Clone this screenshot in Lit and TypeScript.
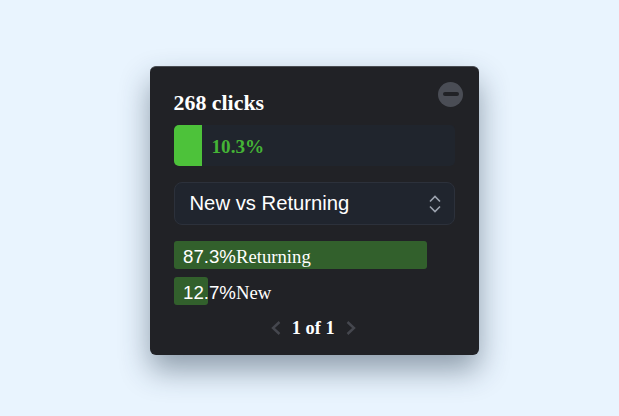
import { LitElement, css, html } from 'lit';
import { customElement } from 'lit/decorators.js';

const rows = [
  { pct: '87.3%', label: 'Returning', width: 253 },
  { pct: '12.7%', label: 'New', width: 34.5 }
];

@customElement('app-root')
export class AppRoot extends LitElement {
  static styles = css`
    :host {
      display: block;
      min-height: 416px;
      background: #e9f4fe;
      font-family: 'Liberation Serif', serif;
      overflow: hidden;
    }

    .page {
      padding: 66px 0 0 150px;
    }

    .card {
      position: relative;
      box-sizing: border-box;
      width: 329px;
      height: 289px;
      padding: 23px 24px 0 23.5px;
      background: #212226;
      border-radius: 6px;
      border-top: 1px solid #4a4d53;
      box-shadow: 0 15px 30px rgba(30, 50, 70, 0.45);
      color: #fff;
    }

    .close {
      position: absolute;
      top: 14.5px;
      right: 16px;
      width: 25px;
      height: 25px;
      border-radius: 50%;
      background: #4a4d55;
      display: flex;
      align-items: center;
      justify-content: center;
    }

    .close span {
      width: 16px;
      height: 4px;
      border-radius: 2px;
      background: #212226;
    }

    .title {
      font-size: 21.9px;
      font-weight: 700;
      line-height: 26px;
      margin-bottom: 9px;
    }

    .progress {
      display: flex;
      align-items: center;
      height: 41px;
      background: #20252d;
      border-radius: 5px;
      overflow: hidden;
      margin-bottom: 16px;
    }

    .progress-fill {
      width: 28px;
      height: 100%;
      background: #4dc23a;
    }

    .progress-label {
      margin: 2px 0 0 10px;
      font-size: 19.2px;
      font-weight: 700;
      color: #45b436;
    }

    .select {
      box-sizing: border-box;
      display: flex;
      align-items: center;
      justify-content: space-between;
      height: 43px;
      padding: 0 12px 0 15px;
      background: #20252e;
      border: 1px solid #2c313b;
      border-radius: 8px;
      font-family: 'Liberation Sans', sans-serif;
      font-size: 20.25px;
      margin-bottom: 16px;
    }

    .select svg {
      display: block;
    }

    .bars {
      display: flex;
      flex-direction: column;
      gap: 8px;
    }

    .bar {
      box-sizing: border-box;
      display: flex;
      align-items: center;
      height: 28px;
      padding: 3px 0 0 9.5px;
      background: #32602c;
      border-radius: 3px;
      white-space: nowrap;
      font-size: 18.7px;
    }

    .pct {
      font-family: 'Liberation Sans', sans-serif;
    }

    .pager {
      display: flex;
      align-items: center;
      justify-content: center;
      gap: 10px;
      margin-top: 10px;
      padding-right: 2px;
      height: 26px;
      font-size: 18.4px;
      font-weight: 700;
    }
  `;

  render() {
    return html`
      <div class="page">
        <div class="card">
          <div class="close"><span></span></div>
          <div class="title">268 clicks</div>
          <div class="progress">
            <div class="progress-fill"></div>
            <div class="progress-label">10.3%</div>
          </div>
          <div class="select">
            <span>New vs Returning</span>
            <svg width="14" height="20" viewBox="0 0 14 20" fill="none" stroke="#9ca3af" stroke-width="1.6">
              <path d="M2 7.5 7 2.5l5 5" />
              <path d="M2 12.5l5 5 5-5" />
            </svg>
          </div>
          <div class="bars">
            ${rows.map(
              (r) => html`
                <div class="bar" style="width:${r.width}px">
                  <span class="pct">${r.pct}</span><span>${r.label}</span>
                </div>
              `
            )}
          </div>
          <div class="pager">
            <svg width="12" height="16" viewBox="0 0 12 16" fill="none" stroke="#45474e" stroke-width="2.4">
              <path d="M9.5 2 3 8l6.5 6" />
            </svg>
            <span>1 of 1</span>
            <svg width="12" height="16" viewBox="0 0 12 16" fill="none" stroke="#45474e" stroke-width="2.4">
              <path d="M2.5 2 9 8l-6.5 6" />
            </svg>
          </div>
        </div>
      </div>
    `;
  }
}
